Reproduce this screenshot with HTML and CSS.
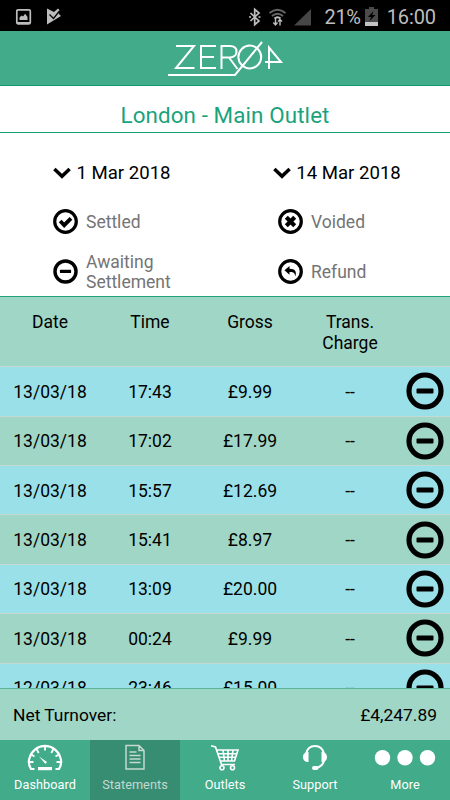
FILE: index.html
```html
<!DOCTYPE html>
<html lang="en">
<head>
<meta charset="utf-8">
<title>Statements</title>
<link rel="stylesheet" href="styles.css">
</head>
<body>
<svg class="defs" width="0" height="0">
  <symbol id="minus" viewBox="0 0 38 38"><circle cx="19" cy="19" r="16" fill="none" stroke="#000" stroke-width="5.2"/><rect x="10.500" y="16.400" width="17" height="5" rx="1"/></symbol>
  <symbol id="chevron" viewBox="0 0 18 12"><path d="M1.400 2 9 9.300 16.600 2" fill="none" stroke="#000" stroke-width="3.500"/></symbol>
</svg>
<div class="screen">
  <div class="status">
    <svg class="status-left" width="48" height="18" viewBox="0 0 48 18">
      <rect x="1.800" y="1.800" width="13.500" height="14" rx="1.200" fill="none" stroke="#bdbdbd" stroke-width="1.700"/>
      <path d="M2 14h13v2H2zM4.500 12V9.500l2-2 1.500 1 2.200-2.700L12.500 9v3z" fill="#bdbdbd"/>
      <path d="M32 .5 39 4l4-3.500 1.500 1.500-1 3.500L46 8 32 16.500z" fill="#bdbdbd"/>
      <path d="m34.500 6.500 4 4L44.500 3" fill="none" stroke="#000" stroke-width="1.300"/>
    </svg>
    <div class="status-right">
      <svg width="74" height="20" viewBox="0 0 74 20">
        <path d="m1.500 6 8.500 8-4.300 3.700V2.300L10 6l-8.500 8M0 10h2M9.500 10h2" fill="none" stroke="#bdbdbd" stroke-width="1.700"/>
        <path d="M20.500 6Q28.500-.5 36.500 6M23 9q5.500-4.500 11 0" fill="none" stroke="#666" stroke-width="2"/>
        <path d="M25.500 11.500Q28.500 9 31.500 11.500" fill="none" stroke="#bdbdbd" stroke-width="2"/>
        <path d="M26.500 11v7M24.300 15.500l2.200 2.500 2-2.500M31 18.500v-6M29 14.500l2-2 2 2" fill="none" stroke="#bdbdbd" stroke-width="1.400"/>
        <path d="M45 18.500 62 2v16.500z" fill="#464646"/>
      </svg>
      <span class="pct">21%</span>
      <svg class="battery" width="13" height="19" viewBox="0 0 13 19"><path d="M0 2h4V0h5v2h4v17H0z" fill="#4b4b4b"/><path d="M8.500 4 3 10h3.200L4.500 14l6-6H7.200z" fill="#000"/><path d="M0 15h13v4H0z" fill="#c4c4c4"/></svg>
      <span class="clock">16:00</span>
    </div>
  </div>
  <header class="brand">
    <svg width="118" height="40" viewBox="0 0 118 40" fill="none" stroke="#fff" stroke-width="2">
      <path d="M9 7h18L9 29h18.500M49 7H34v22h15M34 18h13M54.500 30V7h8.500q6.500 0 6.500 5.500t-6.500 6h-8.500M62 18.500 70.500 30"/>
      <circle cx="82.800" cy="18" r="11.400"/>
      <path d="M1 36h67L95 3M102 30V8.500L114 23H98"/>
    </svg>
  </header>
  <h1 class="title">London - Main Outlet</h1>
  <section class="filters">
    <div class="pick"><svg width="18" height="12"><use href="#chevron"/></svg><span>1 Mar 2018</span></div>
    <div class="pick"><svg width="18" height="12"><use href="#chevron"/></svg><span>14 Mar 2018</span></div>
    <div class="key"><svg width="25" height="25" viewBox="0 0 25 25"><circle cx="12.500" cy="12.500" r="10.800" fill="none" stroke="#000" stroke-width="3.200"/><path d="m7.200 12 4 4.200L18 9.300" fill="none" stroke="#000" stroke-width="3.800"/></svg><span>Settled</span></div>
    <div class="key"><svg width="25" height="25" viewBox="0 0 25 25"><circle cx="12.500" cy="12.500" r="10.800" fill="none" stroke="#000" stroke-width="3.200"/><path d="m8.300 8.300 8.400 8.400m0-8.400-8.400 8.400" fill="none" stroke="#000" stroke-width="4.200"/></svg><span>Voided</span></div>
    <div class="key"><svg width="25" height="25"><use href="#minus"/></svg><span>Awaiting<br>Settlement</span></div>
    <div class="key"><svg width="25" height="25" viewBox="0 0 25 25"><circle cx="12.500" cy="12.500" r="10.800" fill="none" stroke="#000" stroke-width="3.200"/><path d="m6.500 11.300 5-4.300v2.800c5.500 0 7.500 2.700 5.800 7.800-.3-3.400-1.800-4.800-5.800-4.600v2.700z"/></svg><span>Refund</span></div>
  </section>
  <main class="list">
    <div class="row head"><span>Date</span><span>Time</span><span>Gross</span><span>Trans.<br>Charge</span><span></span></div>
    <div class="row"><span>13/03/18</span><span>17:43</span><span>£9.99</span><span>--</span><svg width="38" height="38"><use href="#minus"/></svg></div>
    <div class="row"><span>13/03/18</span><span>17:02</span><span>£17.99</span><span>--</span><svg width="38" height="38"><use href="#minus"/></svg></div>
    <div class="row"><span>13/03/18</span><span>15:57</span><span>£12.69</span><span>--</span><svg width="38" height="38"><use href="#minus"/></svg></div>
    <div class="row"><span>13/03/18</span><span>15:41</span><span>£8.97</span><span>--</span><svg width="38" height="38"><use href="#minus"/></svg></div>
    <div class="row"><span>13/03/18</span><span>13:09</span><span>£20.00</span><span>--</span><svg width="38" height="38"><use href="#minus"/></svg></div>
    <div class="row"><span>13/03/18</span><span>00:24</span><span>£9.99</span><span>--</span><svg width="38" height="38"><use href="#minus"/></svg></div>
    <div class="row"><span>12/03/18</span><span>23:46</span><span>£15.00</span><span>--</span><svg width="38" height="38"><use href="#minus"/></svg></div>
  </main>
  <div class="total"><span>Net Turnover:</span><span>£4,247.89</span></div>
  <nav class="tabs">
    <div class="tab"><svg width="36" height="28" viewBox="0 0 36 28" fill="none" stroke="#fff" stroke-width="2.200"><path d="M7.500 25H4C1.500 21 1.500 17 2.500 14a16 16 0 0 1 31 0c1 3 1 7-1.500 11h-3.500"/><path d="M18 2v4.500M9.500 5l2.200 4M26.500 5l-2.200 4M3.500 10l4 2.500M32.500 10l-4 2.500M2 18h4.500M29.500 18H34" stroke-width="1.800"/><path d="m12 12.500 8 5.500-1.500 2z" fill="#fff" stroke="none"/><path d="M11 24.600h14" stroke-width="3.200"/></svg><span>Dashboard</span></div>
    <div class="tab active"><svg width="20" height="28" viewBox="0 0 20 28" fill="none" stroke="#c4d9d0" stroke-width="1.500"><path d="M1 1.500h13l5 5V25H1zM14 1.500v5h5M4.500 8h7M4.500 11.500h11M4.500 15h11M4.500 18.500h11"/></svg><span>Statements</span></div>
    <div class="tab"><svg width="28" height="28" viewBox="0 0 28 28" fill="none" stroke="#fff" stroke-width="1.600"><path d="M0 1.700 4.500 3 10.500 20.500H24M5.500 6H27l-3.500 11H9.500M7 9.700h18.500M8 13.300h16.500M12 6l1.500 11M17 6v11M22 6l-1.500 11"/><circle cx="11" cy="23.700" r="2"/><circle cx="21.500" cy="23.700" r="2"/></svg><span>Outlets</span></div>
    <div class="tab"><svg width="26" height="28" viewBox="0 0 26 28" fill="none" stroke="#fff" stroke-width="2"><path d="M4 10C5 5 8 2 13 2s8 3 9 8M22 17q-2 6-8.500 7"/><path d="M6.500 8v10C3 18 1 16 1 13s2-5 5.500-5zM19.500 8v10c3.500 0 5.500-2 5.500-5s-2-5-5.500-5z" fill="#fff" stroke="none"/><rect x="10" y="22" width="6.500" height="4" rx="2" fill="#fff" stroke="none"/></svg><span>Support</span></div>
    <div class="tab"><svg width="62" height="28" viewBox="0 0 62 28" fill="#fff"><circle cx="8.500" cy="13.800" r="7.700"/><circle cx="31" cy="13.800" r="7.700"/><circle cx="53.500" cy="13.800" r="7.700"/></svg><span>More</span></div>
  </nav>
</div>
</body>
</html>
```
FILE: styles.css
```css
* { box-sizing: border-box; }
body { margin: 0; font-family: Roboto, "Liberation Sans", sans-serif; color: #000; }
svg { display: block; flex: none; }
.defs { position: absolute; }
.screen { width: 450px; height: 800px; display: flex; flex-direction: column; overflow: hidden; background: #fff; }
.status { height: 31px; flex: none; background: #000; color: #bdbdbd; display: flex; justify-content: space-between; align-items: center; padding: 2px 14px 0 15px; font-size: 20px; }
.status-right { display: flex; align-items: center; }
.status-right > svg:first-child { margin-right: 1px; }
.pct { letter-spacing: -.3px; }
.clock { letter-spacing: -.1px; }
.battery { margin: 0 9px 0 4px; }
.brand { height: 55px; flex: none; background: #41ab8a; border-bottom: 1px solid #159a70; display: flex; justify-content: center; padding: 8px 0 0 1px; }
.title { height: 47px; flex: none; margin: 0; border-bottom: 1px solid #179f75; color: #1aa37b; font-size: 22.400px; font-weight: 400; line-height: 59px; text-align: center; letter-spacing: .1px; }
.filters { height: 163px; flex: none; display: grid; grid-template-columns: 225px 225px; grid-template-rows: 49px 50px 50px; padding-top: 15px; align-items: center; }
.pick { display: flex; align-items: center; justify-content: center; gap: 5px; font-size: 18.600px; padding-right: 1px; }
.key { display: flex; align-items: center; gap: 8px; padding-left: 53px; font-size: 17.500px; line-height: 20px; color: #747474; }
.key svg { margin-top: -1px; }
.list { height: 392px; flex: none; overflow: hidden; border-top: 1px solid #20a277; }
.row { height: 49.400px; display: grid; grid-template-columns: 100px 100px 100px 100px 50px; align-items: center; text-align: center; font-size: 17.500px; border-top: 1px solid #c4d9d2; background: #9ae0e8; }
.row span { padding-top: 1px; }
.row:nth-child(odd) { background: #a0d6c5; }
.row svg { margin-left: 6px; }
.row.head { height: 69.200px; border: 0; align-items: start; padding-top: 14px; line-height: 21px; }
.total { height: 52px; flex: none; background: #a0d6c5; border-top: 1px solid #5ab694; display: flex; justify-content: space-between; align-items: center; padding: 1px 13px 0; font-size: 17.400px; }
.tabs { height: 60px; flex: none; background: #41ab8a; display: grid; grid-template-columns: repeat(5, 90px); color: #fff; }
.tab { display: flex; flex-direction: column; align-items: center; padding-top: 4px; font-size: 12.700px; line-height: 15px; letter-spacing: .05px; gap: 5px; }
.active { background: #378d72; color: #c4d9d0; }
```
